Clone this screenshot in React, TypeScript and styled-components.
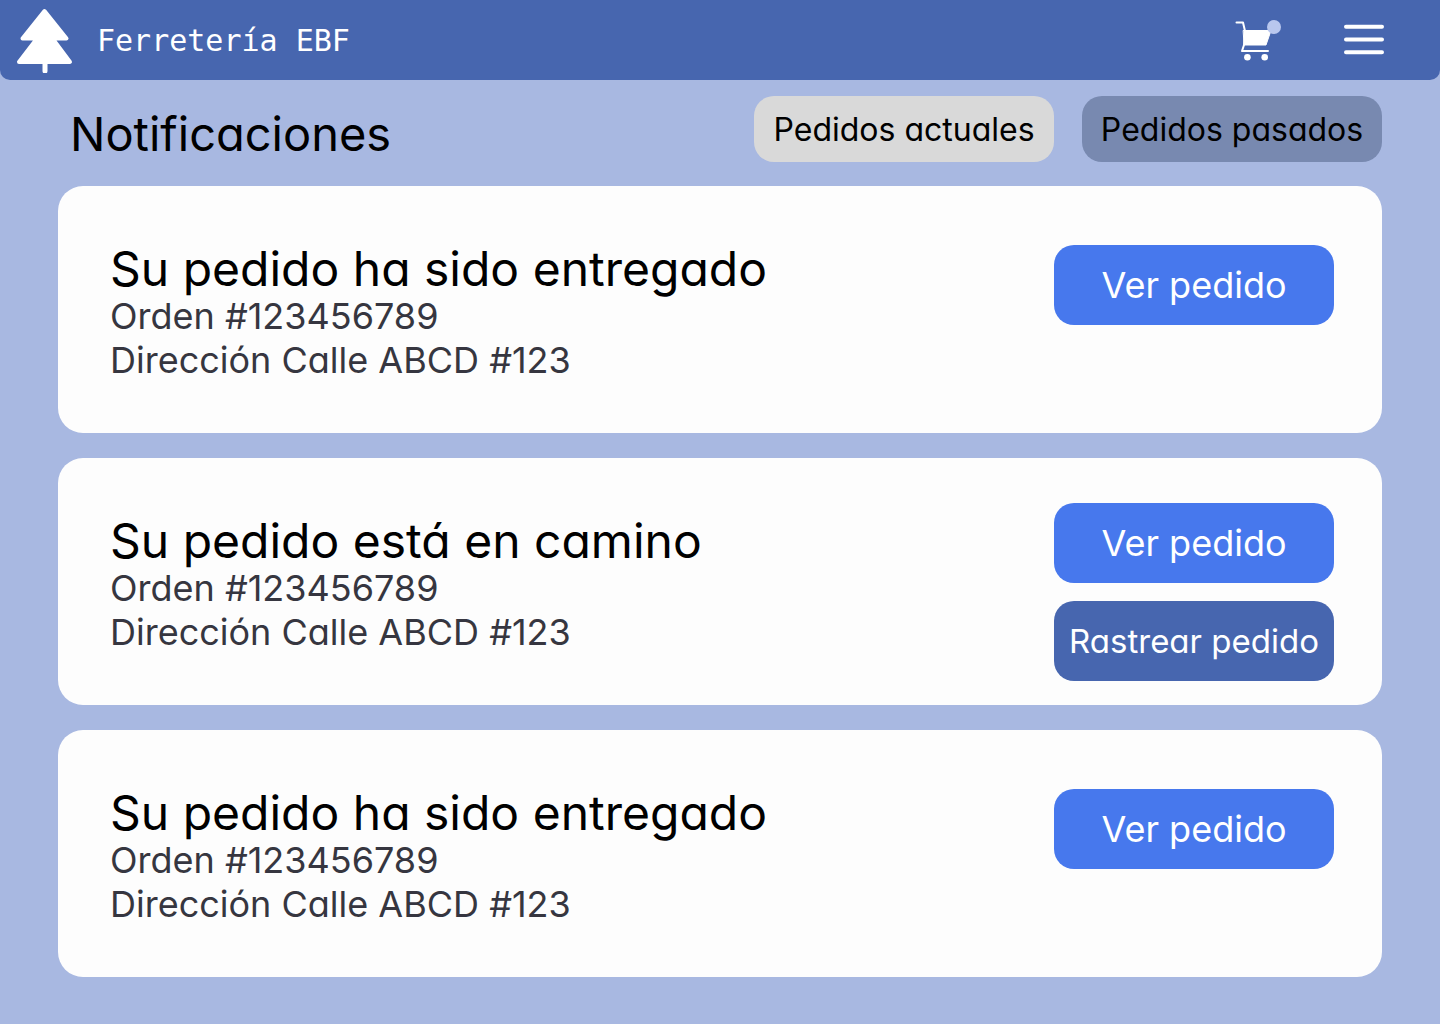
import React from "react";
import styled, { createGlobalStyle } from "styled-components";

const GlobalStyle = createGlobalStyle`
  *, *::before, *::after { box-sizing: border-box; }
  body {
    margin: 0;
    background: #a8b8e1;
    color: #000;
    font-family: Inter, "Open Sans", sans-serif;
    font-feature-settings: "cv11";
  }
  h1, h2, p, ul { margin: 0; padding: 0; font-weight: 400; }
  button { font: inherit; font-feature-settings: inherit; border: 0; cursor: pointer; }
`;

const Header = styled.header`
  display: flex;
  align-items: center;
  justify-content: space-between;
  height: 80px;
  padding: 0 55px 0 16px;
  background: #4766af;
  border-radius: 0 0 10px 10px;
`;

const Brand = styled.a`
  display: flex;
  align-items: center;
  gap: 24px;
  color: #fff;
  text-decoration: none;
  font-family: "DejaVu Sans Mono", monospace;
  font-size: 30px;
`;

const HeaderActions = styled.div`
  display: flex;
  align-items: center;
  gap: 62px;
`;

const IconButton = styled.button`
  display: flex;
  padding: 0;
  background: none;
`;

const Main = styled.main`
  padding: 16px 58px 47px;
`;

const TitleBar = styled.div`
  display: flex;
  align-items: center;
  justify-content: space-between;
  margin-bottom: 24px;
  padding-left: 12px;
`;

const PageTitle = styled.h1`
  padding-top: 10px;
  font-size: 47px;
  line-height: 56px;
`;

const Tabs = styled.nav`
  display: flex;
  gap: 28px;
`;

const Tab = styled.button<{ $active?: boolean }>`
  width: 300px;
  height: 66px;
  padding: 0;
  border-radius: 20px;
  background: ${({ $active }) => ($active ? "#d9d9d9" : "#7889b0")};
  color: #000;
  font-size: 32px;
`;

const CardList = styled.ul`
  display: flex;
  flex-direction: column;
  gap: 25px;
  list-style: none;
`;

const Card = styled.li`
  display: flex;
  justify-content: space-between;
  min-height: 247px;
  padding: 24px 48px 24px 52px;
  border-radius: 25px;
  background: #fdfdfd;
`;

const CardText = styled.div`
  padding-top: 34px;
`;

const CardTitle = styled.h2`
  font-size: 48px;
  line-height: 50px;
`;

const CardLine = styled.p`
  color: #363640;
  font-size: 36px;
  line-height: 44px;
`;

const CardActions = styled.div<{ $stacked: boolean }>`
  display: flex;
  flex-direction: column;
  gap: 18px;
  padding-top: ${({ $stacked }) => ($stacked ? "21px" : "35px")};
`;

const ActionButton = styled.button<{ $secondary?: boolean }>`
  width: 280px;
  height: 80px;
  padding: 0;
  border-radius: 20px;
  background: ${({ $secondary }) => ($secondary ? "#4766af" : "#4778ed")};
  color: #fff;
  font-size: ${({ $secondary }) => ($secondary ? "33px" : "36px")};
`;

const TreeIcon = () => (
  <svg width="57" height="66" viewBox="0 0 57 66" fill="#fff" stroke="#fff" strokeLinejoin="round" strokeLinecap="round" aria-hidden="true">
    <path d="M28.500 4L50.500 31.500H36.500L54 55H3L21 31.500H6.500Z" strokeWidth="4" />
    <path d="M29 55V64" strokeWidth="5" />
  </svg>
);

const CartIcon = () => (
  <svg width="46" height="42" viewBox="0 0 46 42" fill="none" stroke="#fff" strokeLinecap="round" strokeLinejoin="round" aria-hidden="true">
    <path d="M1.500 3.500H8L10 12L9 26L7 32H33" strokeWidth="2" />
    <path d="M8.500 11.500H36L31 26H9.500Z" fill="#fff" strokeWidth="1" />
    <circle cx="12.400" cy="38.300" r="3.300" fill="#fff" stroke="none" />
    <circle cx="29.700" cy="38.300" r="3.300" fill="#fff" stroke="none" />
    <circle cx="39" cy="8" r="7" fill="#b9c7ee" stroke="none" />
  </svg>
);

const MenuIcon = () => (
  <svg width="42" height="32" viewBox="0 0 42 32" fill="none" stroke="#fff" strokeWidth="4" strokeLinecap="round" aria-hidden="true">
    <path d="M3 2.800H39M3 15.500H39M3 28.200H39" />
  </svg>
);

const notifications = [
  { id: 1, title: "Su pedido ha sido entregado", trackable: false },
  { id: 2, title: "Su pedido está en camino", trackable: true },
  { id: 3, title: "Su pedido ha sido entregado", trackable: false },
];

export default function App() {
  return (
    <>
      <GlobalStyle />
      <Header>
        <Brand href="#">
          <TreeIcon />
          <span>Ferretería EBF</span>
        </Brand>
        <HeaderActions>
          <IconButton type="button" aria-label="Carrito">
            <CartIcon />
          </IconButton>
          <IconButton type="button" aria-label="Menú">
            <MenuIcon />
          </IconButton>
        </HeaderActions>
      </Header>
      <Main>
        <TitleBar>
          <PageTitle>Notificaciones</PageTitle>
          <Tabs>
            <Tab type="button" $active>Pedidos actuales</Tab>
            <Tab type="button">Pedidos pasados</Tab>
          </Tabs>
        </TitleBar>
        <CardList>
          {notifications.map(({ id, title, trackable }) => (
            <Card key={id}>
              <CardText>
                <CardTitle>{title}</CardTitle>
                <CardLine>Orden #123456789</CardLine>
                <CardLine>Dirección Calle ABCD #123</CardLine>
              </CardText>
              <CardActions $stacked={trackable}>
                <ActionButton type="button">Ver pedido</ActionButton>
                {trackable && (
                  <ActionButton type="button" $secondary>Rastrear pedido</ActionButton>
                )}
              </CardActions>
            </Card>
          ))}
        </CardList>
      </Main>
    </>
  );
}
